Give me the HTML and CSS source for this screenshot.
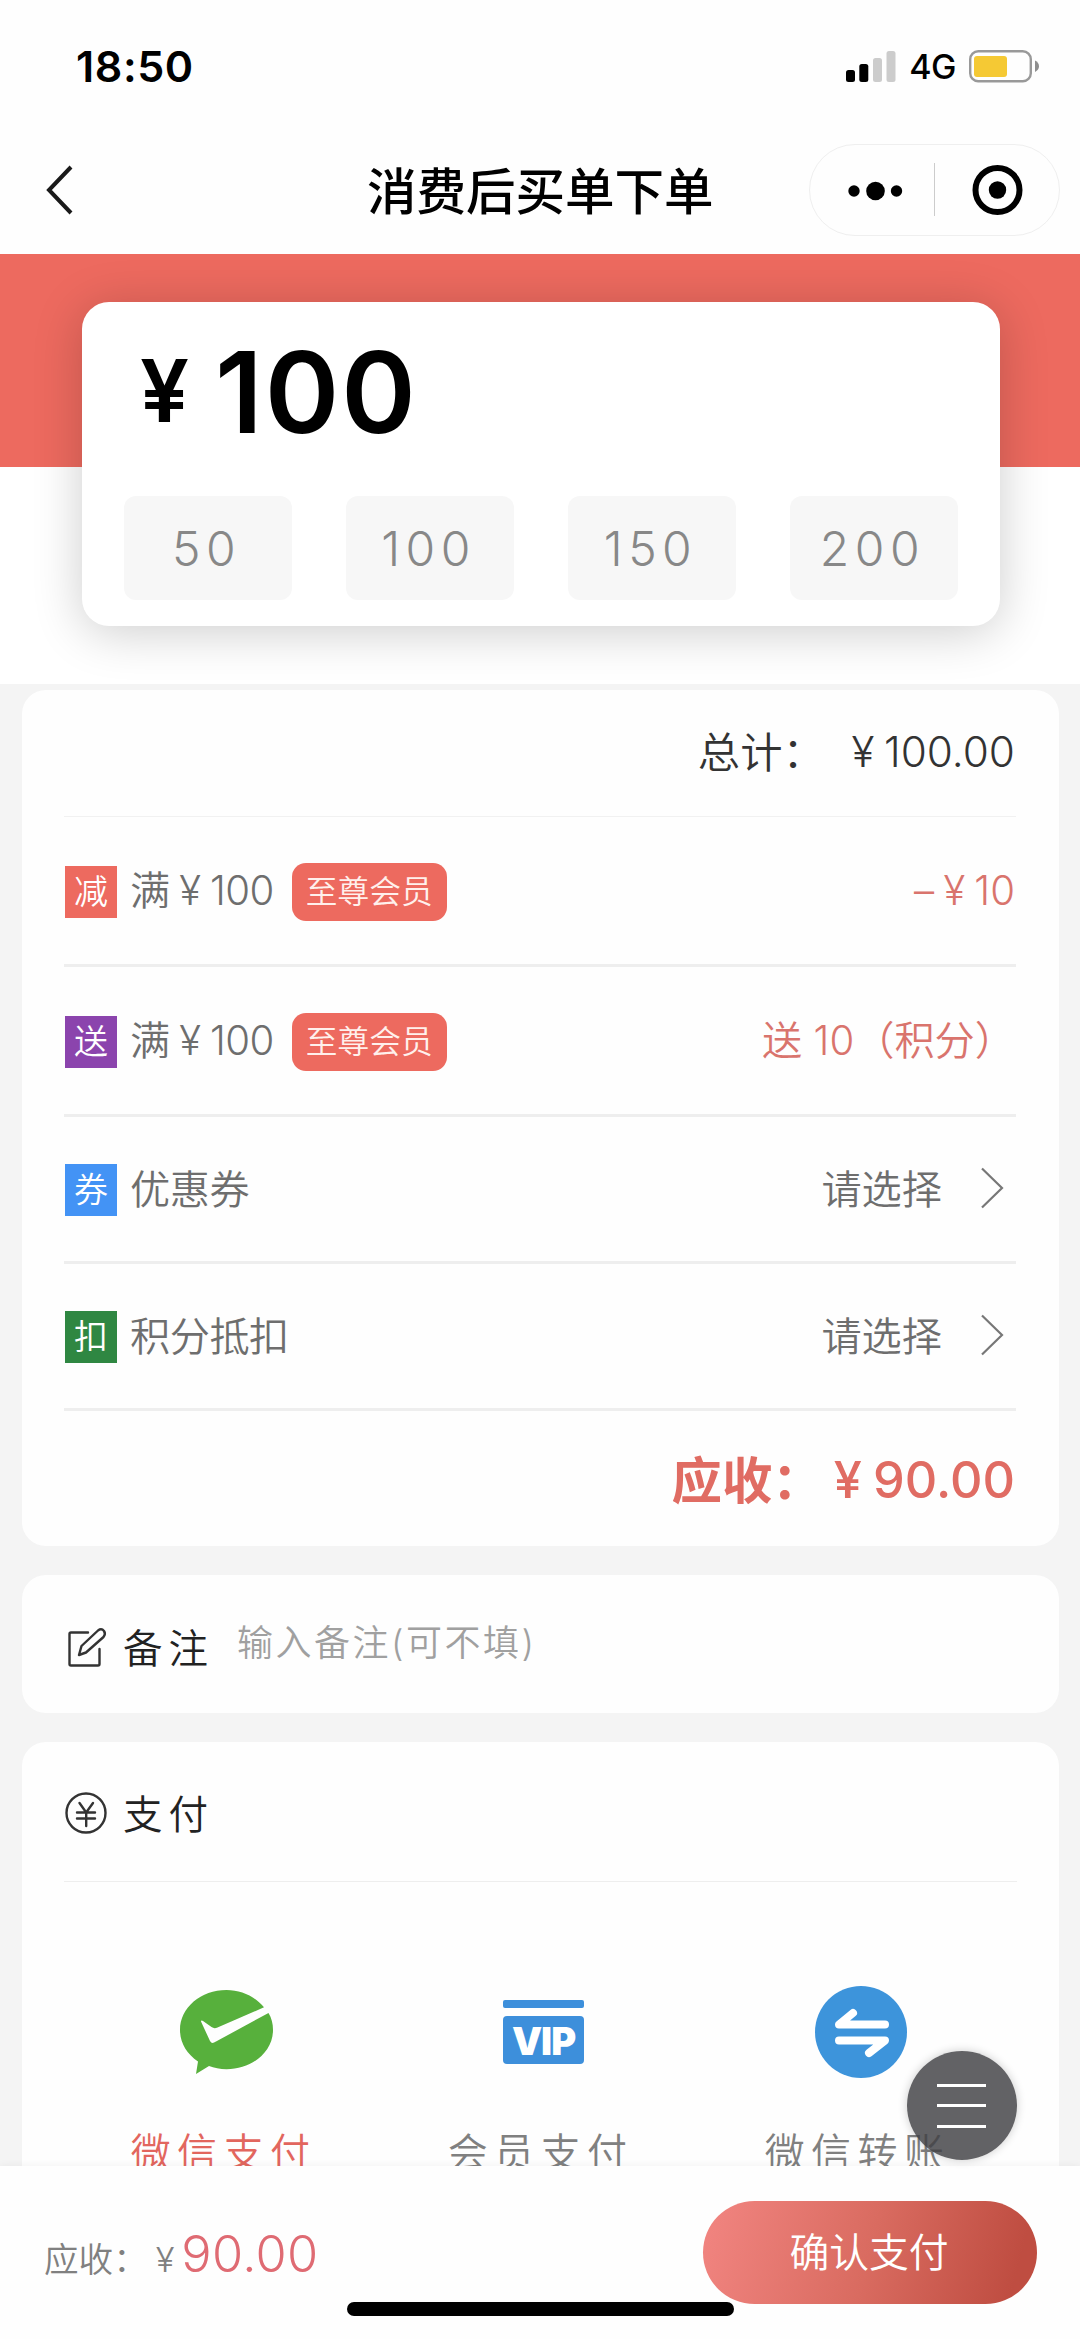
FILE: index.html
```html
<!DOCTYPE html>
<html lang="zh-CN">
<head>
<meta charset="utf-8">
<title>消费后买单下单</title>
<link rel="stylesheet" href="styles.css">
</head>
<body>
<div class="screen">
  <header class="header">
    <div class="status">
      <span class="time">18:50</span>
      <div class="status-right">
        <svg class="signal" width="50" height="31" viewBox="0 0 50 31">
          <rect x="0" y="19" width="9" height="12" rx="2.5"/>
          <rect x="13.3" y="13" width="9" height="18" rx="2.5"/>
          <rect x="27" y="7" width="9" height="24" rx="2.5" fill="#ccc"/>
          <rect x="40.5" y="0" width="9" height="31" rx="2.5" fill="#ccc"/>
        </svg>
        <span class="network">4G</span>
        <svg class="battery" width="71" height="33" viewBox="0 0 71 33">
          <rect x="1.2" y="1.2" width="60.6" height="30" rx="8" fill="none" stroke="#999" stroke-width="2.4"/>
          <rect x="5" y="6" width="33" height="21" rx="3" fill="#f5c934"/>
          <path d="M66 10.500q4 2 4 5.700t-4 5.700z" fill="#8e8e8e"/>
        </svg>
      </div>
    </div>
    <nav class="nav">
      <svg class="back" width="30" height="52" viewBox="0 0 30 52"><path d="M26 3L4 26l22 23" fill="none" stroke="#1a1a1a" stroke-width="4"/></svg>
      <h1 class="title">消费后买单下单</h1>
      <div class="capsule">
        <svg width="249" height="90" viewBox="0 0 249 90">
          <circle cx="44" cy="46" r="5.700"/><circle cx="65.500" cy="46" r="9.300"/><circle cx="86.500" cy="46" r="5.700"/>
          <path d="M124.500 18v53" stroke="#ccc" stroke-width="1"/>
          <circle cx="187.500" cy="45" r="22" fill="none" stroke="#000" stroke-width="6"/><circle cx="187.500" cy="45" r="8.700"/>
        </svg>
      </div>
    </nav>
  </header>

  <main class="content">
    <section class="hero">
      <div class="amount-card">
        <div class="amount"><span class="amount-yen">¥</span><span class="amount-num">100</span></div>
        <div class="presets">
          <div class="preset">50</div><div class="preset">100</div><div class="preset">150</div><div class="preset">200</div>
        </div>
      </div>
    </section>

    <section class="card bill">
      <div class="row total"><span>总计：</span><span class="total-sum"><i class="yen">¥</i>100.00</span></div>
      <div class="row line">
        <span class="badge red">减</span><span class="label">满<i class="yen">¥</i>100</span><span class="tag">至尊会员</span>
        <span class="value minus accent">–<i class="yen">¥</i>10</span>
      </div>
      <div class="row line">
        <span class="badge purple">送</span><span class="label">满<i class="yen">¥</i>100</span><span class="tag">至尊会员</span>
        <span class="value accent">送 10（积分）</span>
      </div>
      <div class="row line short">
        <span class="badge blue">券</span><span class="label">优惠券</span>
        <span class="value">请选择</span>
        <svg class="chevron" width="24" height="42" viewBox="0 0 24 42"><path d="M2 1.500L22 21 2 40.500" fill="none" stroke="#777" stroke-width="2.200"/></svg>
      </div>
      <div class="row line short">
        <span class="badge green">扣</span><span class="label">积分抵扣</span>
        <span class="value">请选择</span>
        <svg class="chevron" width="24" height="42" viewBox="0 0 24 42"><path d="M2 1.500L22 21 2 40.500" fill="none" stroke="#777" stroke-width="2.200"/></svg>
      </div>
      <div class="row due"><span class="due-label">应收：</span><span class="due-sum"><i class="yen">¥</i>90.00</span></div>
    </section>

    <section class="card note">
      <svg class="head-icon" width="44" height="44" viewBox="0 0 44 44" fill="none" stroke="#333" stroke-width="2.400" stroke-linecap="round" stroke-linejoin="round">
        <path d="M24 7.500H7q-1.500 0-1.500 1.500v30q0 1.500 1.500 1.500h27q1.500 0 1.500-1.500V24"/>
        <path d="M15 30l2.500-9L34 5.500q3.500-2.500 6 .500 2 3-.500 6L22 27.500z"/>
      </svg>
      <span class="head-text">备注</span>
      <span class="placeholder">输入备注(可不填)</span>
    </section>

    <section class="card pay">
      <div class="pay-head">
        <svg class="head-icon" width="44" height="44" viewBox="0 0 44 44" fill="none" stroke="#333" stroke-width="2.400" stroke-linecap="round">
          <circle cx="22" cy="22" r="19.500"/>
          <path d="M15.500 12l6.700 9.500L29 12M13 21.500h18M13 27.500h18M22.200 21.500V35"/>
        </svg>
        <span class="head-text">支付</span>
      </div>
      <div class="methods">
        <div class="method selected">
          <div class="method-icon">
            <svg class="wechat" width="93" height="84" viewBox="0 0 93 84">
              <path d="M46.500 0C21 0 0 17.500 0 40c0 13 7 24 18 31.500L16 84l13-8c5 2 11 3.200 17.500 3.200C72 79.200 93 62 93 40c0-6.500-1.500-12-4.500-17L36 51.500c-3 2-4.500 2-6-.500L21 31.500q0-1.500 2-.500l8.500 6c2 1.300 3.500 1.500 6 .500L84 17.300C75 6.500 61.500 0 46.500 0z" fill="#57b03c"/>
            </svg>
          </div>
          <span>微信支付</span>
        </div>
        <div class="method">
          <div class="method-icon"><div class="vip"><div class="vip-bar"></div><div class="vip-body">VIP</div></div></div>
          <span>会员支付</span>
        </div>
        <div class="method">
          <div class="method-icon">
            <svg width="92" height="92" viewBox="0 0 92 92">
              <circle cx="46" cy="46" r="46" fill="#3d94db"/>
              <path d="M70 38.500H24L38 27M24 54.500h46L54 67" fill="none" stroke="#fff" stroke-width="8" stroke-linecap="round" stroke-linejoin="round"/>
            </svg>
          </div>
          <span>微信转账</span>
        </div>
      </div>
    </section>
  </main>

  <footer class="footer">
    <div class="footer-sum"><span class="footer-label">应收：<i class="yen">¥</i></span><span class="footer-num">90.00</span></div>
    <div class="confirm">确认支付</div>
  </footer>

  <div class="fab"><span></span><span></span><span></span></div>
  <div class="home-bar"></div>
</div>
</body>
</html>
```
FILE: styles.css
```css
* { box-sizing: border-box; }
body {
  margin: 0;
  background: #fff;
  font-family: Inter, "Noto Sans CJK SC", sans-serif;
  color: #333;
}
svg { display: block; }
.screen {
  position: relative;
  width: 1080px;
  height: 2339px;
  display: flex;
  flex-direction: column;
  overflow: hidden;
}
.yen {
  display: inline-block;
  width: 1em;
  text-align: center;
  font-style: normal;
}

/* header */
.header { height: 254px; flex: none; background: #fefefe; }
.status {
  height: 132px;
  padding: 0 40px 0 76px;
  display: flex;
  justify-content: space-between;
  align-items: center;
}
.time { font-size: 43px; font-weight: 600; color: #000; letter-spacing: .6px; }
.status-right { display: flex; align-items: center; }
.network { font-size: 34px; font-weight: 500; color: #000; margin: 2px 13px 0 13px; letter-spacing: -.5px; line-height: 32px; }
.nav {
  height: 122px;
  padding: 12px 20px 0 45px;
  display: grid;
  grid-template-columns: 322px auto 1fr;
  align-items: start;
}
.back { margin-top: 20px; }
.title {
  margin: 2px 0 0;
  font-size: 49.500px;
  line-height: 92px;
  font-weight: 500;
  color: #000;
}
.capsule {
  justify-self: end;
  width: 251px;
  height: 92px;
  border: 1px solid #efefef;
  border-radius: 46px;
}

/* amount */
.content { flex: 1; min-height: 0; overflow: hidden; background: #f4f4f4; }
.hero {
  height: 430px;
  padding: 48px 80px 0 82px;
  background: linear-gradient(#ed6a5f 213px, #fff 213px);
}
.amount-card {
  height: 324px;
  padding: 0 42px;
  background: #fff;
  border-radius: 27px;
  box-shadow: 0 6px 50px rgba(0, 0, 0, .2);
}
.amount {
  height: 194px;
  padding-left: 16px;
  display: flex;
  align-items: baseline;
  color: #000;
  font-weight: 600;
}
.amount-yen { width: 75px; font-size: 87px; position: relative; top: -11px; }
.amount-num { font-size: 113px; line-height: 181px; letter-spacing: 2px; }
.presets { display: flex; justify-content: space-between; }
.preset {
  width: 168px;
  height: 104px;
  padding-right: 3px;
  border-radius: 12px;
  background: #f7f7f7;
  color: #888;
  font-size: 48px;
  font-weight: 350;
  line-height: 106px;
  letter-spacing: 5.500px;
  text-align: center;
}

/* cards */
.card {
  margin: 0 21px 29px 22px;
  background: #fefefe;
  border-radius: 24px;
}
.bill { margin-top: 6px; height: 856px; padding: 0 43px 0 42px; }
.row {
  height: 150px;
  display: flex;
  align-items: center;
  border-bottom: 3px solid #eee;
  font-size: 40.200px;
  font-weight: 350;
  color: #6e6e6e;
}
.row.short { height: 147px; }
.total {
  height: 127px;
  padding: 0 1px 7px 0;
  justify-content: flex-end;
  gap: 17px;
  border-bottom: 1px solid #f1f1f1;
  color: #333;
  font-size: 42.300px;
}
.total-sum { margin-top: 3px; }
.due {
  height: 135px;
  padding: 1px 1px 0 0;
  justify-content: flex-end;
  gap: 0;
  border: 0;
  font-size: 50.400px;
  font-weight: 500;
  color: #e06c63;
}
.due-label { margin-top: -4px; font-weight: 600; }
.badge {
  width: 52px;
  height: 52px;
  margin: 2px 14px 0 1px;
  color: #fff;
  font-size: 34px;
  line-height: 52px;
  font-weight: 350;
  text-align: center;
}
.red { background: #ed6a5f; }
.purple { background: #8b44ad; }
.blue { background: #4393f5; }
.green { background: #2f8742; }
.tag {
  height: 58px;
  margin: 2px 0 0 18px;
  padding: 0 14px;
  border-radius: 14px;
  background: #ed6a5f;
  color: #fff0ec;
  font-size: 31.700px;
  line-height: 58px;
  font-weight: 350;
}
.label { margin: -6px 0 0 -1px; letter-spacing: -.5px; }
.value { margin: -6px 1px 0 auto; }
.minus { margin-top: -1px; }
.accent { color: #d9746d; }
.chevron { margin: -3px 12px 0 37px; }

.head-icon { flex: none; }
.head-text { margin: -2px 0 0 15px; font-size: 39.500px; font-weight: 350; letter-spacing: 6px; color: #222; }
.note { height: 138px; padding: 5px 42px 0; display: flex; align-items: center; }
.placeholder { margin: -14px 0 0 23px; font-size: 36px; letter-spacing: 2.500px; font-weight: 350; color: #a0a0a0; }
.pay { height: 600px; padding: 0 42px; }
.pay-head { height: 140px; padding-top: 2px; display: flex; align-items: center; border-bottom: 1px solid #eee; }
.methods { display: flex; margin: 0 -42px; padding: 0 43px; }
.method {
  flex: 1;
  padding-top: 104px;
  display: flex;
  flex-direction: column;
  align-items: center;
  font-size: 40px;
  font-weight: 350;
  letter-spacing: 6.400px;
  line-height: 60px;
  color: #808080;
}
.selected { color: #e2665e; }
.method-icon { height: 92px; margin: 0 0 45px 6px; display: flex; align-items: center; }
.vip { width: 81px; }
.vip-bar { height: 8px; margin-bottom: 8px; border-radius: 2px; background: #3d8fdb; }
.vip-body {
  height: 48px;
  border-radius: 4px;
  background: #3d8fdb;
  color: #fff;
  font-size: 38px;
  font-weight: 900;
  line-height: 50px;
  letter-spacing: -1px;
  text-align: center;
}

/* footer */
.footer {
  height: 173px;
  flex: none;
  padding: 35px 43px 0 44px;
  display: flex;
  justify-content: space-between;
  background: #fefefe;
  box-shadow: 0 0 8px rgba(0, 0, 0, .06);
}
.footer-sum { line-height: 105px; }
.footer-label { font-size: 34.600px; color: #808080; font-weight: 350; }
.footer-num { font-size: 50.500px; font-weight: 350; color: #df6b73; letter-spacing: .3px; margin-left: -1px; }
.confirm {
  width: 334px;
  height: 103px;
  padding-right: 2px;
  border-radius: 52px;
  background: linear-gradient(105deg, #f28581, #d96b60 50%, #bf4d41 92%);
  color: #fff;
  font-size: 39.800px;
  font-weight: 350;
  line-height: 104px;
  text-align: center;
}

/* overlays */
.fab {
  position: absolute;
  left: 907px;
  top: 2051px;
  width: 110px;
  height: 109px;
  padding-right: 2px;
  border-radius: 50%;
  background: rgba(64, 64, 67, .82);
  box-shadow: 0 0 10px rgba(0, 0, 0, .2);
  display: flex;
  flex-direction: column;
  align-items: center;
  justify-content: center;
  gap: 17.500px;
}
.fab span { width: 49px; height: 3px; background: #fff; }
.home-bar {
  position: absolute;
  left: 347px;
  top: 2302px;
  width: 387px;
  height: 14px;
  border-radius: 7px;
  background: #000;
}
```
